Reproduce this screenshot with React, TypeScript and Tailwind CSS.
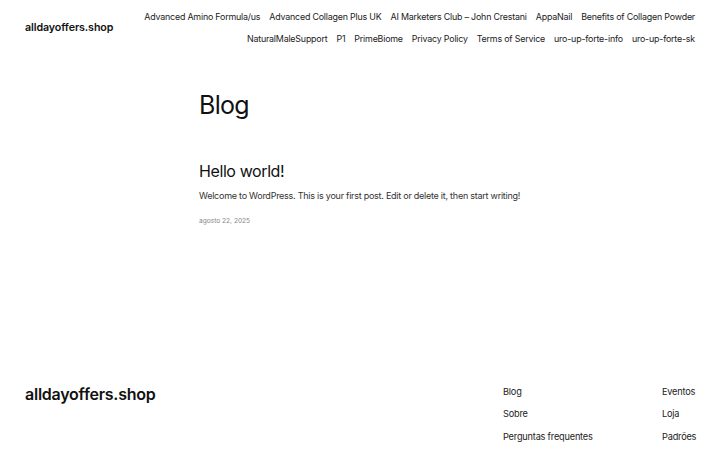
import React from 'react';

const navRows = [
  [
    'Advanced Amino Formula/us',
    'Advanced Collagen Plus UK',
    'AI Marketers Club – John Crestani',
    'AppaNail',
    'Benefits of Collagen Powder',
  ],
  [
    'NaturalMaleSupport',
    'P1',
    'PrimeBiome',
    'Privacy Policy',
    'Terms of Service',
    'uro-up-forte-info',
    'uro-up-forte-sk',
  ],
];

export default function App() {
  return (
    <div className="w-[720px] min-h-[450px] bg-white text-[#111111] font-['Inter',sans-serif]">
      {/* header */}
      <header className="flex items-center justify-between pl-[25px] pr-[25px] pt-[6px]">
        <a className="text-[10.7px] font-semibold tracking-[-0.1px]">alldayoffers.shop</a>
        <nav className="flex flex-col items-end text-[8.9px] tracking-[-0.2px] leading-[22px] text-[#222222]">
          {navRows.map((row, i) => (
            <div key={i} className="flex gap-x-[9px]">
              {row.map((item) => (
                <a key={item} className="whitespace-nowrap">{item}</a>
              ))}
            </div>
          ))}
        </nav>
      </header>

      {/* main */}
      <main className="pl-[199px] pr-[150px] pt-[35px]">
        <h1 className="text-[25px] font-normal leading-[40px] tracking-[-0.7px]">Blog</h1>
        <article className="mt-[34px]">
          <h2 className="text-[16px] font-normal leading-[24px] tracking-[-0.4px]">Hello world!</h2>
          <p className="mt-[6px] text-[9px] leading-[14px] text-[#333333] tracking-[-0.25px]">
            Welcome to WordPress. This is your first post. Edit or delete it, then start writing!
          </p>
          <div className="mt-[14px] text-[6.6px] text-[#888888]">agosto 22, 2025</div>
        </article>
      </main>

      {/* footer */}
      <footer className="flex justify-between pl-[25px] pr-[25px] mt-[157px]">
        <a className="text-[16px] font-semibold tracking-[-0.25px] leading-[24px] -mt-[2px]">alldayoffers.shop</a>
        <div className="flex gap-[70px] -mt-[3px] text-[9.2px] tracking-[-0.2px] leading-[22.5px] text-[#222222]">
          <div className="flex flex-col w-[89px]">
            <a>Blog</a>
            <a>Sobre</a>
            <a className="whitespace-nowrap">Perguntas frequentes</a>
          </div>
          <div className="flex flex-col w-[33px]">
            <a>Eventos</a>
            <a>Loja</a>
            <a>Padrões</a>
          </div>
        </div>
      </footer>
    </div>
  );
}
